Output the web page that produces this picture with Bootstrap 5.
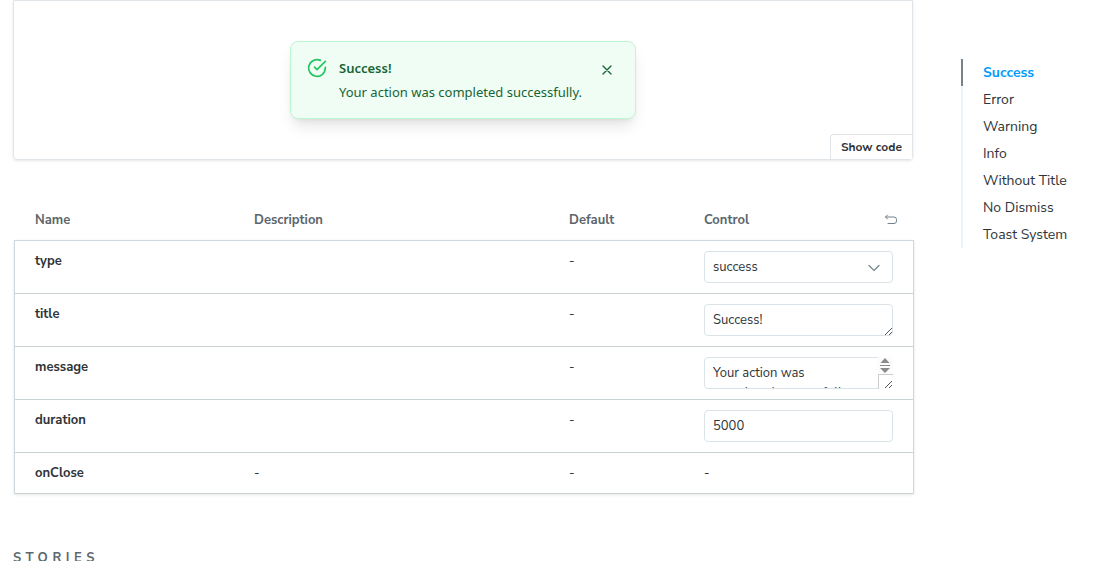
<!DOCTYPE html>
<html lang="en">
<head>
<meta charset="utf-8">
<meta name="viewport" content="width=device-width, initial-scale=1">
<title>Toast</title>
<link href="https://cdn.jsdelivr.net/npm/bootstrap@5.3.0/dist/css/bootstrap.min.css" rel="stylesheet">
<style>
body{font-family:"Nunito Sans","Open Sans",sans-serif;font-size:13px;line-height:20px;color:#2e3438}
.docs-page{padding-left:13px;gap:48px}
.docs-nav{width:154px;padding-top:59px;font-size:14px}
.docs-nav li{border-left:2px solid #ecf4f9}
.docs-nav li.current{border-color:#73828c}
.docs-nav a{padding-left:20px;line-height:27px;color:#2e3438}
.docs-nav .current a{color:#029cfd}
.preview{height:160px;padding-top:40px;border:1px solid #dfe5e9;border-radius:0 0 4px 4px;box-shadow:0 1px 3px rgba(0,0,0,.1)}
.notice{width:346px;height:78px;padding:16px;gap:12px;background:#f0fdf4;border:1px solid #bbf7d0;border-radius:8px;font-family:"Noto Sans","Open Sans",sans-serif;color:#166534;box-shadow:0 10px 15px -3px rgba(0,0,0,.1),0 4px 6px -4px rgba(0,0,0,.1)}
.notice-title{line-height:20px;font-weight:600}
.notice-text{margin-top:4px;line-height:20px}
.notice-close{width:24px;height:24px;color:#166534}
.show-code{right:0;bottom:0;height:25px;padding:0 10px;background:#fff;border:solid #dfe5e9;border-width:1px 0 0 1px;border-radius:4px 0 0 0;font-size:12px;font-weight:700;line-height:16px;color:#2e3438}
.args{table-layout:fixed;margin:40px 0 0 1px;width:100%;border-collapse:separate;border-spacing:0}
.args th,.args td{padding:10px 15px;vertical-align:top;font-size:13px}
.args th:first-child{padding-left:20px}
.args th:last-child{padding-right:16px}
.args td:last-child{padding-right:20px}
.args thead th{height:40px;color:#5c656b;font-weight:700}
.args thead th:first-child{border-left:1px solid transparent}
.args tbody{box-shadow:0 1px 3px rgba(0,0,0,.1)}
.args tbody th,.args tbody td{border-bottom:1px solid #cbd2d6}
.args tbody th{font-weight:700;border-left:1px solid #cfd8dd}
.args tbody td:last-child{border-right:1px solid #cfd8dd}
.args tbody tr:first-child>*{border-top:1px solid #cfdae0}
.field,.field:focus{height:32px;padding:5px 8px;border:1px solid #d9e3e8;border-radius:4px;font-size:13px;line-height:20px;color:#2e3438;background:#fff;resize:none;overflow:hidden;appearance:none;box-shadow:none}
.chevron{right:12px;top:10px}
.grip{right:0;bottom:0}
.scroller{right:0;top:0}
.stories{margin:54px 0 0;font-size:13px;font-weight:700;line-height:20px;letter-spacing:.35em;color:#5c6870}
</style>
</head>
<body class="overflow-hidden vh-100">
<div class="docs-page d-flex">
<main class="flex-grow-1">
<section class="preview position-relative">
<div class="notice d-flex mx-auto" role="status">
<svg class="flex-shrink-0" width="20" height="20" viewBox="0 0 24 24" fill="none" stroke="#22c55e" stroke-width="2" stroke-linecap="round" stroke-linejoin="round"><path d="M22 11.08V12a10 10 0 1 1-5.93-9.14"/><path d="m9 11 3 3L22 4"/></svg>
<div class="flex-grow-1"><div class="notice-title">Success!</div><div class="notice-text text-nowrap">Your action was completed successfully.</div></div>
<button class="notice-close btn p-0 border-0 d-flex align-items-center justify-content-center flex-shrink-0" type="button" aria-label="Dismiss"><svg width="16" height="16" viewBox="0 0 24 24" fill="none" stroke="currentColor" stroke-width="2" stroke-linecap="round"><path d="M18 6 6 18M6 6l12 12"/></svg></button>
</div>
<button class="show-code position-absolute" type="button">Show code</button>
</section>
<table class="args">
<colgroup><col style="width:25%"><col style="width:35%"><col style="width:15%"><col style="width:25%"></colgroup>
<thead><tr><th>Name</th><th>Description</th><th>Default</th><th><div class="d-flex justify-content-between align-items-center">Control<button class="btn p-0 border-0 d-flex" type="button" aria-label="Reset controls"><svg width="14" height="14" viewBox="0 0 14 14" fill="none" stroke="#73828c" stroke-linecap="round" stroke-linejoin="round"><path d="M3.500 2 1.500 4l2 2M1.500 4H10a2.500 2.500 0 0 1 2.500 2.500v1.500a2.500 2.500 0 0 1-2.500 2.500H4"/></svg></button></div></th></tr></thead>
<tbody>
<tr><th><label for="type">type</label></th><td></td><td>-</td><td><div class="position-relative"><select id="type" class="field d-block w-100"><option>success</option><option>error</option><option>warning</option><option>info</option></select><svg class="chevron position-absolute pe-none" width="14" height="14" viewBox="0 0 14 14" fill="none" stroke="#73828c" stroke-width="1.200" stroke-linecap="round"><path d="m2 4.500 5 5 5-5"/></svg></div></td></tr>
<tr><th><label for="title">title</label></th><td></td><td>-</td><td><div class="position-relative"><textarea id="title" rows="1" class="field d-block w-100">Success!</textarea><svg class="grip position-absolute pe-none" width="9" height="9" viewBox="0 0 9 9" stroke="#555"><path d="m1 8 7-7M5 8l3-3"/></svg></div></td></tr>
<tr><th><label for="message">message</label></th><td></td><td>-</td><td><div class="position-relative"><textarea id="message" rows="1" class="field d-block w-100 pe-4">Your action was completed successfully.</textarea><svg class="scroller position-absolute pe-none" width="15" height="32" viewBox="0 0 15 32"><path fill="#fcfcfc" d="M0 0h15v17H0z"/><path fill="#fff" d="M1 17h14v15H1z"/><path fill="#8b8b8b" d="m7 1 4.500 5h-9zM2 8h10v1H2zm0 3h10l-5 5z"/><path fill="none" stroke="#c9cdd0" d="M15 17.500H.5V32"/><path stroke="#555" d="m7 31 7-7M11 31l3-3"/></svg></div></td></tr>
<tr><th><label for="duration">duration</label></th><td></td><td>-</td><td><input id="duration" type="text" inputmode="numeric" class="field d-block w-100" value="5000"></td></tr>
<tr><th>onClose</th><td>-</td><td>-</td><td>-</td></tr>
</tbody>
</table>
<h2 class="stories">STORIES</h2>
</main>
<nav class="docs-nav flex-shrink-0" aria-label="On this page">
<ul class="list-unstyled mb-0">
<li class="current"><a class="d-block text-decoration-none fw-bold" href="#success">Success</a></li>
<li><a class="d-block text-decoration-none" href="#error">Error</a></li>
<li><a class="d-block text-decoration-none" href="#warning">Warning</a></li>
<li><a class="d-block text-decoration-none" href="#info">Info</a></li>
<li><a class="d-block text-decoration-none" href="#without-title">Without Title</a></li>
<li><a class="d-block text-decoration-none" href="#no-dismiss">No Dismiss</a></li>
<li><a class="d-block text-decoration-none" href="#toast-system">Toast System</a></li>
</ul>
</nav>
</div>
</body>
</html>
